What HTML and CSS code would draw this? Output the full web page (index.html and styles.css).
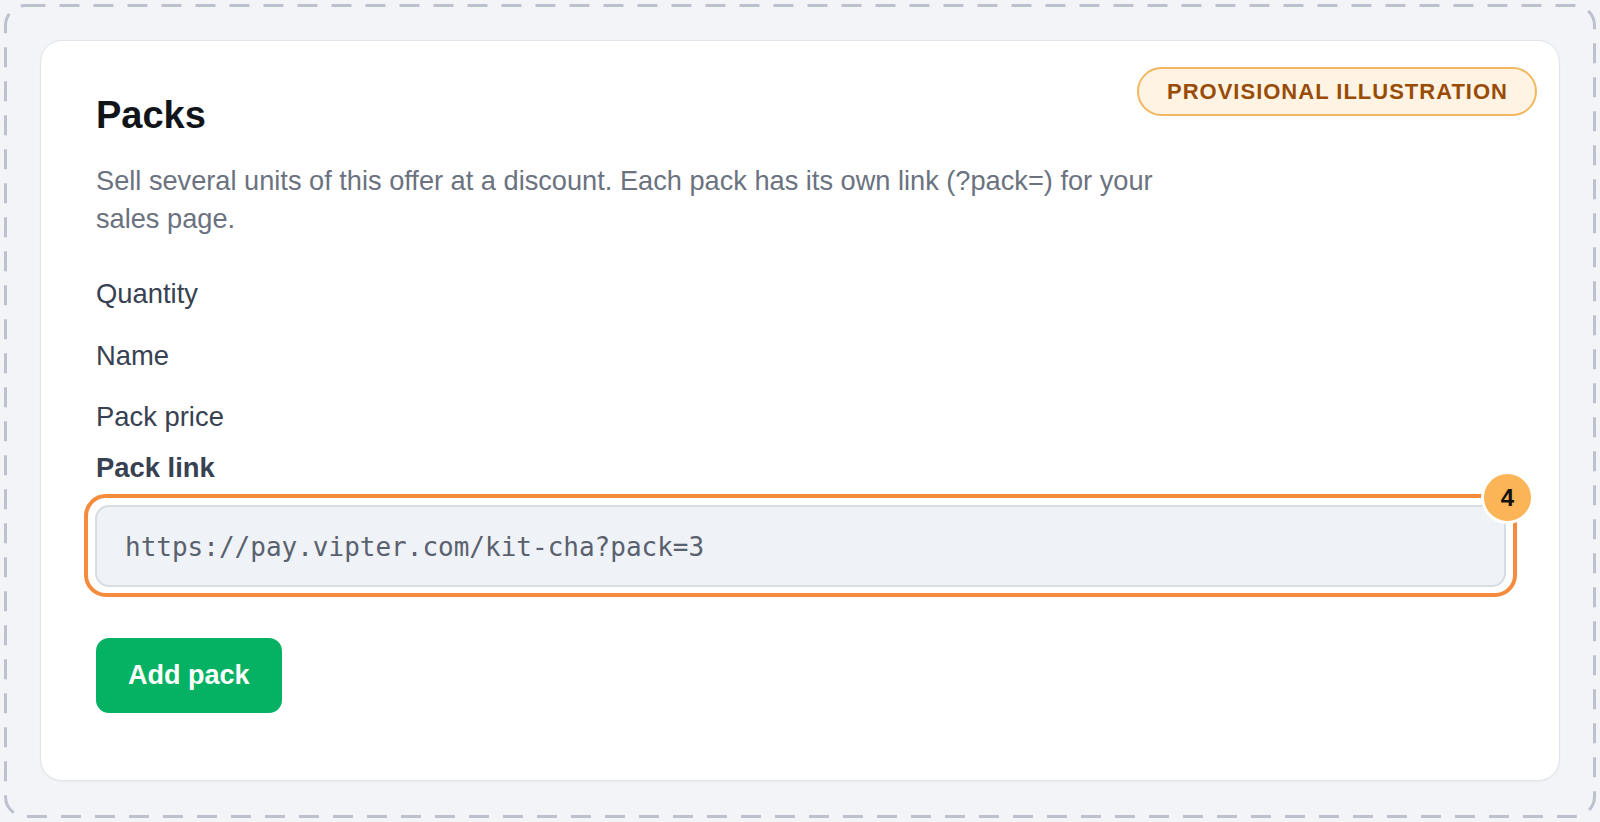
FILE: index.html
```html
<!DOCTYPE html>
<html lang="en">
<head>
<meta charset="utf-8">
<title>Packs</title>
<link rel="stylesheet" href="styles.css">
</head>
<body>
<div class="frame">
  <svg class="frame-dash" aria-hidden="true"><rect class="frame-rect" x="5.5" y="5.5" rx="20" ry="20"></rect></svg>
  <section class="card">
    <span class="tag">PROVISIONAL ILLUSTRATION</span>
    <h1 class="title">Packs</h1>
    <p class="desc">Sell several units of this offer at a discount. Each pack has its own link (?pack=) for your sales page.</p>
    <div class="fields">
      <div class="field-label">Quantity</div>
      <div class="field-label">Name</div>
      <div class="field-label">Pack price</div>
    </div>
    <div class="link-label">Pack link</div>
    <div class="link-wrap">
      <div class="link-input">https://pay.vipter.com/kit-cha?pack=3</div>
      <div class="highlight"><span class="step">4</span></div>
    </div>
    <button class="add-btn" type="button">Add pack</button>
  </section>
</div>
</body>
</html>
```
FILE: styles.css
```css
* { box-sizing: border-box; }
html, body { margin: 0; padding: 0; }
body {
  background: #f2f4f8;
  font-family: "Liberation Sans", Arial, Helvetica, sans-serif;
  width: 1600px;
  height: 822px;
  overflow: hidden;
}
.frame {
  position: relative;
  width: 1600px;
  height: 822px;
  padding: 40px 40px 41px 40px;
}
.frame-dash {
  position: absolute;
  left: 0; top: 0;
  width: 100%; height: 100%;
  pointer-events: none;
}
.frame-rect {
  width: calc(100% - 11px);
  height: calc(100% - 11px);
  fill: none;
  stroke: #bcc1cd;
  stroke-width: 3;
  stroke-dasharray: 20 14;
}
.card {
  position: relative;
  height: 100%;
  background: #ffffff;
  border: 1px solid #e1e4ea;
  border-radius: 22px;
  box-shadow: 0 1px 2px rgba(16, 24, 40, 0.04);
  padding: 51px 53px 0 55px;
}
.tag {
  position: absolute;
  top: 26px;
  right: 22px;
  height: 49px;
  padding: 0 27px 0 28px;
  display: flex;
  align-items: center;
  border: 2px solid #f3b75f;
  background: #fff3e3;
  border-radius: 25px;
  color: #984c06;
  font-weight: 700;
  font-size: 22px;
  letter-spacing: 1px;
}
.title {
  margin: 0;
  font-size: 38px;
  line-height: 46px;
  font-weight: 700;
  color: #111418;
}
.desc {
  margin: 24px 0 0 0;
  max-width: 1090px;
  font-size: 27.2px;
  line-height: 38px;
  color: #6b7280;
}
.fields {
  margin-top: 37px;
  display: flex;
  flex-direction: column;
  gap: 23.5px;
}
.field-label {
  font-size: 27.4px;
  line-height: 38px;
  color: #374151;
}
.link-label {
  margin-top: 13px;
  font-size: 27.4px;
  line-height: 38px;
  font-weight: 700;
  color: #374151;
}
.link-wrap {
  position: relative;
  margin-top: 18px;
  margin-left: -1px;
}
.link-input {
  height: 82px;
  display: flex;
  align-items: center;
  padding-left: 28px;
  padding-top: 2px;
  background: #eff2f6;
  border: 2px solid #d8dde4;
  border-radius: 14px;
  font-family: "DejaVu Sans Mono", "Liberation Mono", monospace;
  font-size: 26px;
  color: #5a616e;
}
.highlight {
  position: absolute;
  left: -11px;
  right: -11px;
  top: -11px;
  bottom: -10px;
  border: 4px solid #f68b3d;
  border-radius: 22px;
  pointer-events: none;
}
.step {
  position: absolute;
  top: -27px;
  right: -21px;
  width: 53px;
  height: 53px;
  border-radius: 50%;
  background: #fbb456;
  border: 3px solid #ffffff;
  display: flex;
  align-items: center;
  justify-content: center;
  font-weight: 700;
  font-size: 24px;
  color: #111111;
}
.add-btn {
  margin-top: 51px;
  height: 75px;
  padding: 0 32px;
  border: none;
  border-radius: 13px;
  background: #05b264;
  color: #ffffff;
  font-family: "Liberation Sans", Arial, Helvetica, sans-serif;
  font-weight: 700;
  font-size: 27px;
}
```
